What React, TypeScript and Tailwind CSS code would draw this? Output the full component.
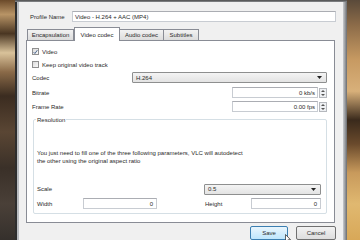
import type { ReactNode } from 'react'

const FONT = { fontFamily: '"Liberation Sans", Arial, sans-serif' }

function Check({ checked }: { checked?: boolean }) {
  return (
    <div className="w-[7px] h-[7px] border border-[#8f8f8f] bg-[linear-gradient(135deg,#dcdcdc,#fafafa)] flex items-center justify-center">
      {checked && (
        <svg width="6" height="6" viewBox="0 0 6 6">
          <path d="M0.8 3.2 L2.3 4.8 L5.2 0.8" fill="none" stroke="#2b4a7a" strokeWidth="1" />
        </svg>
      )}
    </div>
  )
}

function Box({ className, children }: { className?: string; children?: ReactNode }) {
  return (
    <div className={`border border-[#c8ccd2] border-t-[#abadb3] bg-white flex items-center ${className ?? ''}`}>
      {children}
    </div>
  )
}

function Select({ value, className }: { value: string; className?: string }) {
  return (
    <div className={`h-[11px] border border-[#8e8f8f] rounded-[1px] bg-[linear-gradient(#f4f4f4,#e3e3e3)] flex items-center pl-[3px] pr-[4px] ${className ?? ''}`}>
      <span className="flex-1">{value}</span>
      <svg width="5" height="3" viewBox="0 0 5 3">
        <path d="M0 0 H5 L2.5 3 Z" fill="#222" />
      </svg>
    </div>
  )
}

function Spin({ value }: { value: string }) {
  return (
    <div className="flex items-center gap-[1px] h-[11px]">
      <Box className="w-[86px] h-[11px] justify-end pr-[2px]">{value}</Box>
      <div className="w-[8px] h-[10px] border border-[#b5b8bd] bg-[#eef0f3] flex flex-col items-center justify-around">
        <svg width="4" height="2" viewBox="0 0 4 2"><path d="M0 2 L2 0 L4 2 Z" fill="#555" /></svg>
        <svg width="4" height="2" viewBox="0 0 4 2"><path d="M0 0 L2 2 L4 0 Z" fill="#555" /></svg>
      </div>
    </div>
  )
}

export default function App() {
  return (
    <div className="w-[360px] h-[240px] flex overflow-hidden text-[6px] leading-none text-[#2a2a2a]" style={FONT}>
      {/* background photo, left */}
      <div className="w-[15px] bg-[linear-gradient(#6b4a2a_0%,#b89466_6%,#4a3622_14%,#d9c29a_22%,#8a6a48_30%,#3b2c20_40%,#5a4634_55%,#3a3028_70%,#4a4038_85%,#35302c_100%)]" />

      {/* window frame */}
      <div className="w-[332px] flex flex-col bg-[linear-gradient(90deg,#2e2e2e_0px,#2e2e2e_2px,#b9bcc0_2px,#b9bcc0_4px,#f0f0f0_4px,#f0f0f0_328px,#c9cbce_328px,#6a6c70_332px)]">
        <div className="h-[4px] bg-[linear-gradient(#4a4a4a,#8a8c8f)]" />
        <div className="flex-1 mx-[4px] bg-[#f0f0f0] flex flex-col">
          {/* profile name */}
          <div className="mt-[9px] h-[11px] flex items-center pl-[11px] pr-[7px]">
            <span className="w-[42px]">Profile Name</span>
            <Box className="flex-1 h-[11px] pl-[2px]">Video - H.264 + AAC (MP4)</Box>
          </div>

          {/* tabs */}
          <div className="mt-[5px] h-[13px] flex items-end pl-[8px]">
            <div className="w-[47px] h-[11px] border border-b-0 border-[#898c95] bg-[linear-gradient(#f2f2f2,#dcdcdc)] flex items-center justify-center">Encapsulation</div>
            <div className="w-[46px] h-[14px] -mb-px relative z-10 border border-b-0 border-[#898c95] bg-white flex items-center justify-center">Video codec</div>
            <div className="w-[44px] h-[11px] border border-b-0 border-l-0 border-[#898c95] bg-[linear-gradient(#f2f2f2,#dcdcdc)] flex items-center justify-center">Audio codec</div>
            <div className="w-[35px] h-[11px] border border-b-0 border-l-0 border-[#898c95] bg-[linear-gradient(#f2f2f2,#dcdcdc)] flex items-center justify-center">Subtitles</div>
          </div>

          {/* panel */}
          <div className="ml-[7px] w-[309px] h-[183px] border border-[#898c95] bg-white flex flex-col pl-[5px] pr-[7px]">
            <div className="mt-[7px] h-[7px] flex items-center gap-[3px]">
              <Check checked />
              <span>Video</span>
            </div>
            <div className="mt-[6px] h-[7px] flex items-center gap-[3px]">
              <Check />
              <span>Keep original video track</span>
            </div>
            <div className="mt-[4px] h-[11px] flex items-center">
              <span className="w-[100px]">Codec</span>
              <Select value="H.264" className="flex-1" />
            </div>
            <div className="mt-[4px] h-[11px] flex items-center justify-between">
              <span>Bitrate</span>
              <Spin value="0 kb/s" />
            </div>
            <div className="mt-[3px] h-[11px] flex items-center justify-between">
              <span>Frame Rate</span>
              <Spin value="0.00 fps" />
            </div>

            {/* resolution group */}
            <div className="mt-[7px] ml-[1px] h-[95px] border border-[#d5dfe5] rounded-[2px] relative flex flex-col pl-[3px] pr-[5px]">
              <span className="absolute -top-[3px] left-[2px] bg-white px-[1px]">Resolution</span>
              <div className="mt-[29px] leading-[8px]">
                <div>You just need to fill one of the three following parameters, VLC will autodetect</div>
                <div>the other using the original aspect ratio</div>
              </div>
              <div className="mt-[19px] h-[10px] flex items-center">
                <span className="w-[167px]">Scale</span>
                <Select value="0.5" className="flex-1 h-[10px]" />
              </div>
              <div className="mt-[4px] h-[11px] flex items-center">
                <span className="w-[46px]">Width</span>
                <Box className="w-[74px] h-[11px] justify-end pr-[3px]">0</Box>
                <span className="ml-[48px] w-[46px]">Height</span>
                <Box className="flex-1 h-[11px] justify-end pr-[3px]">0</Box>
              </div>
            </div>
          </div>

          {/* buttons */}
          <div className="mt-[3px] flex justify-end gap-[8px] pr-[7px]">
            <div className="relative w-[38px] h-[14px] border border-[#3c7fb1] rounded-[2px] bg-[linear-gradient(#eaf6fd,#bee6fd)] flex items-center justify-center">
              Save
              <svg className="absolute left-[34px] top-[7px]" width="6" height="9" viewBox="0 0 6 9">
                <path d="M0.5 0.5 V7.5 L2.2 6 L3.4 8.5 L4.4 8 L3.3 5.7 H5.5 Z" fill="#fff" stroke="#222" strokeWidth="0.7" />
              </svg>
            </div>
            <div className="w-[40px] h-[14px] border border-[#707070] rounded-[2px] bg-[linear-gradient(#f2f2f2,#dddddd)] flex items-center justify-center">Cancel</div>
          </div>
        </div>
      </div>

      {/* background photo, right */}
      <div className="w-[13px] bg-[linear-gradient(#5a4a3a_0%,#8a6a48_10%,#c79a62_25%,#d8b07a_38%,#3a2a1c_50%,#6a4a2c_60%,#c89a5c_72%,#e0b870_85%,#d8a858_100%)]" />
    </div>
  )
}
